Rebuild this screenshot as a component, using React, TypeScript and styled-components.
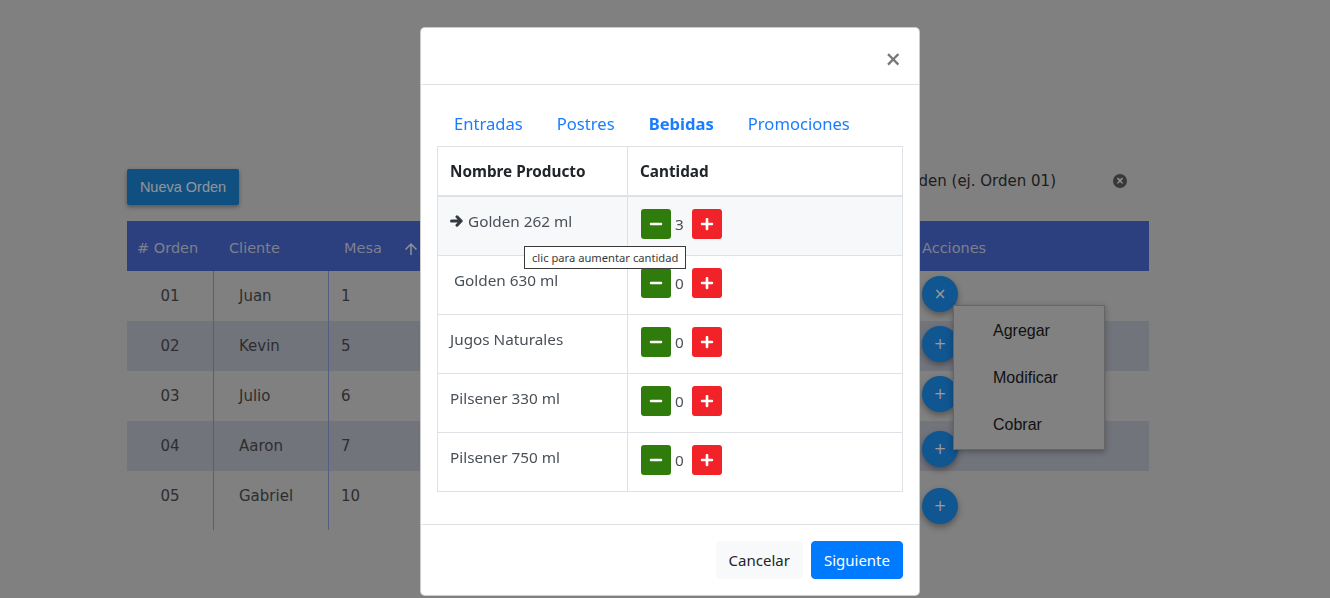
import React from 'react';
import styled, { createGlobalStyle } from 'styled-components';
import { FaMinus, FaPlus } from 'react-icons/fa';
import { MdArrowUpward } from 'react-icons/md';

const GlobalStyle = createGlobalStyle`
  html, body { margin: 0; padding: 0; }
  body {
    background: #d5d5d5;
    font-family: "DejaVu Sans", sans-serif;
    overflow: hidden;
  }
  * { box-sizing: border-box; }
`;

/* ---------- background page ---------- */

const Page = styled.div`
  width: 1330px;
  height: 598px;
  padding: 169px 181px 0 127px;
`;

const Toolbar = styled.div`
  display: flex;
  align-items: flex-start;
  justify-content: space-between;
  height: 36px;
`;

const NewOrderButton = styled.button`
  width: 112px;
  height: 36px;
  border: none;
  border-radius: 2px;
  background: #1a85d8;
  color: #f2f6fb;
  font-family: "Liberation Sans", Arial, sans-serif;
  font-size: 14.5px;
  box-shadow: 0 2px 4px rgba(0, 0, 0, 0.35);
  padding: 0;
`;

const Search = styled.div`
  display: flex;
  align-items: center;
  padding: 3px 22px 0 0;
  gap: 57px;
`;

const SearchText = styled.span`
  font-size: 15px;
  line-height: 18px;
  color: #333;
`;

const ClearIcon = styled.span`
  width: 14px;
  height: 14px;
  border-radius: 50%;
  background: #5e5e5e;
  color: #fff;
  font-size: 10px;
  line-height: 14px;
  text-align: center;
  font-weight: bold;
`;

const OrdersGrid = styled.div`
  position: relative;
  margin-top: 16px;
`;

const GridRow = styled.div<{ $head?: boolean; $striped?: boolean; $extra?: number }>`
  display: grid;
  grid-template-columns: 87px 115px 1fr 237px;
  grid-template-rows: 100%;
  height: ${p => 50 + (p.$extra || 0)}px;
  background: ${p => (p.$head ? '#4a69d3' : p.$striped ? '#bec1cf' : 'transparent')};
  color: ${p => (p.$head ? '#cfd5ea' : '#4e4e4e')};
`;

const Cell = styled.div<{ $pad?: number; $center?: boolean; $line?: boolean; $extra?: number }>`
  display: flex;
  align-items: center;
  justify-content: ${p => (p.$center ? 'center' : 'flex-start')};
  padding-left: ${p => p.$pad || 0}px;
  padding-bottom: ${p => p.$extra || 0}px;
  border-right: ${p => (p.$line ? '1px solid #8e9dd6' : 'none')};
  font-size: 15px;
`;

const HeadCell = styled.div<{ $pad: number }>`
  display: flex;
  align-items: center;
  padding-left: ${p => p.$pad}px;
  padding-top: 4px;
  font-size: 14.5px;
  gap: 20px;
`;

const HeadArrow = styled(MdArrowUpward)`
  color: #f4f6ff;
  margin-top: 2px;
`;

const ActionCircle = styled.div<{ $shift?: number }>`
  width: 36px;
  height: 36px;
  border-radius: 50%;
  background: #1c8ff0;
  color: #fff;
  display: flex;
  align-items: center;
  justify-content: center;
  font-size: 15px;
  transform: translateY(${p => p.$shift || 0}px);
  box-shadow: 0 3px 6px rgba(0, 0, 0, 0.35);
`;

const ContextMenu = styled.div`
  position: absolute;
  left: 826px;
  top: 84px;
  width: 152px;
  padding: 1px 0;
  background: #d8d8d8;
  border: 1px solid #a8a8a8;
  box-shadow: 0 2px 6px rgba(0, 0, 0, 0.3);
`;

const MenuItem = styled.div`
  height: 47px;
  line-height: 47px;
  padding-left: 39px;
  font-family: "Liberation Sans", Arial, sans-serif;
  font-size: 16px;
  color: #1c1c1c;
`;

/* ---------- modal ---------- */

const Backdrop = styled.div`
  position: fixed;
  inset: 0;
  background: rgba(0, 0, 0, 0.4);
  z-index: 10;
`;

const Dialog = styled.div`
  position: relative;
  width: 500px;
  margin: 27px 0 0 420px;
  background: #fff;
  border: 1px solid rgba(0, 0, 0, 0.2);
  border-radius: 5px;
  font-family: "Noto Sans", "Open Sans", sans-serif;
  color: #212529;
`;

const ModalHeader = styled.div`
  height: 57px;
  border-bottom: 1px solid #dee2e6;
  display: flex;
  align-items: center;
  justify-content: flex-end;
  padding: 0 18px 0 16px;
`;

const CloseButton = styled.button`
  border: none;
  background: none;
  padding: 0;
  font-family: "Noto Sans", sans-serif;
  font-size: 27px;
  font-weight: 500;
  line-height: 1;
  color: #777;
  margin-top: 4px;
`;

const ModalBody = styled.div`
  padding: 16px 16px 32px;
`;

const Tabs = styled.nav`
  display: flex;
  height: 45px;
`;

const Tab = styled.a<{ $active?: boolean }>`
  padding: 0 17px;
  line-height: 45px;
  font-size: 16.6px;
  color: #1a7dff;
  font-weight: ${p => (p.$active ? 700 : 400)};
  text-decoration: none;
`;

const ProductTable = styled.table`
  width: 466px;
  border-collapse: collapse;
  font-size: 15.3px;
`;

const Th = styled.th<{ $w?: number }>`
  width: ${p => (p.$w ? `${p.$w}px` : 'auto')};
  text-align: left;
  padding: 12px;
  line-height: 24px;
  font-weight: 700;
  border: 1px solid #dee2e6;
  border-bottom: 2px solid #dee2e6;
  color: #212529;
`;

const Tr = styled.tr<{ $hover?: boolean }>`
  background: ${p => (p.$hover ? '#f7f8fa' : '#fff')};
`;

const Td = styled.td`
  padding: 12px;
  vertical-align: top;
  border: 1px solid #dee2e6;
  color: #495057;
`;

const NameBox = styled.div`
  height: 34px;
  line-height: 24px;
  display: flex;
  align-items: flex-start;
  gap: 4px;
`;

const ArrowSvg = styled.svg`
  width: 14px;
  height: 12px;
  margin-top: 6px;
  flex: none;
`;

const ArrowIcon = () => (
  <ArrowSvg viewBox="0 0 14 12">
    <path
      d="M1.5 6 H11 M7 1.8 L11.2 6 L7 10.2"
      fill="none"
      stroke="#343a40"
      strokeWidth="3"
      strokeLinecap="round"
      strokeLinejoin="round"
    />
  </ArrowSvg>
);

const Controls = styled.div`
  height: 34px;
  display: flex;
  align-items: flex-start;
  gap: 4px;
  padding-left: 1px;
`;

const QtyButton = styled.button<{ $kind: 'minus' | 'plus' }>`
  width: 30px;
  height: 30px;
  border: none;
  border-radius: 3px;
  padding: 0;
  display: flex;
  align-items: center;
  justify-content: center;
  color: #fff;
  background: ${p => (p.$kind === 'minus' ? '#2f7c0c' : '#f12228')};
`;

const Qty = styled.span`
  line-height: 30px;
  width: 13px;
  text-align: left;
`;

const Tooltip = styled.div`
  position: absolute;
  left: 103px;
  top: 218px;
  height: 23px;
  padding: 0 7px;
  background: #fff;
  border: 1px solid #3a3a3a;
  font-size: 11.2px;
  line-height: 21px;
  color: #3a3a3a;
  white-space: nowrap;
`;

const ModalFooter = styled.div`
  border-top: 1px solid #dee2e6;
  padding: 16px;
  display: flex;
  justify-content: flex-end;
  gap: 8px;
`;

const FooterButton = styled.button<{ $primary?: boolean }>`
  height: 38px;
  padding: 0 12px;
  border: 1px solid ${p => (p.$primary ? '#007bff' : '#f8f9fa')};
  border-radius: 4px;
  background: ${p => (p.$primary ? '#007bff' : '#f8f9fa')};
  color: ${p => (p.$primary ? '#fff' : '#212529')};
  font-family: "Noto Sans", "Open Sans", sans-serif;
  font-size: 15px;
`;

const orders = [
  { id: '01', client: 'Juan', table: '1', icon: '×', shift: -2 },
  { id: '02', client: 'Kevin', table: '5', icon: '+', shift: -2 },
  { id: '03', client: 'Julio', table: '6', icon: '+', shift: -2 },
  { id: '04', client: 'Aaron', table: '7', icon: '+', shift: 3 },
  { id: '05', client: 'Gabriel', table: '10', icon: '+', shift: 10 },
];

const products = [
  { name: 'Golden 262 ml', qty: 3, active: true, lead: false },
  { name: 'Golden 630 ml', qty: 0, active: false, lead: true },
  { name: 'Jugos Naturales', qty: 0, active: false, lead: false },
  { name: 'Pilsener 330 ml', qty: 0, active: false, lead: false },
  { name: 'Pilsener 750 ml', qty: 0, active: false, lead: false },
];

export default function App() {
  return (
    <>
      <GlobalStyle />
      <Page>
        <Toolbar>
          <NewOrderButton>Nueva Orden</NewOrderButton>
          <Search>
            <SearchText>Buscar Orden (ej. Orden 01)</SearchText>
            <ClearIcon>×</ClearIcon>
          </Search>
        </Toolbar>
        <OrdersGrid>
          <GridRow $head>
            <HeadCell $pad={10}># Orden</HeadCell>
            <HeadCell $pad={15}>Cliente</HeadCell>
            <HeadCell $pad={15}>
              Mesa <HeadArrow size={18} />
            </HeadCell>
            <HeadCell $pad={10}>Acciones</HeadCell>
          </GridRow>
          {orders.map((o, i) => {
            const extra = i === orders.length - 1 ? 9 : 0;
            return (
              <GridRow key={o.id} $striped={i % 2 === 1} $extra={extra}>
                <Cell $center $line $extra={extra}>{o.id}</Cell>
                <Cell $pad={25} $line $extra={extra}>{o.client}</Cell>
                <Cell $pad={12} $extra={extra}>{o.table}</Cell>
                <Cell $pad={10} $extra={extra}>
                  <ActionCircle $shift={o.shift}>{o.icon}</ActionCircle>
                </Cell>
              </GridRow>
            );
          })}
          <ContextMenu>
            <MenuItem>Agregar</MenuItem>
            <MenuItem>Modificar</MenuItem>
            <MenuItem>Cobrar</MenuItem>
          </ContextMenu>
        </OrdersGrid>
      </Page>

      <Backdrop>
        <Dialog>
          <ModalHeader>
            <CloseButton>×</CloseButton>
          </ModalHeader>
          <ModalBody>
            <Tabs>
              <Tab>Entradas</Tab>
              <Tab>Postres</Tab>
              <Tab $active>Bebidas</Tab>
              <Tab>Promociones</Tab>
            </Tabs>
            <ProductTable>
              <thead>
                <tr>
                  <Th $w={190}>Nombre Producto</Th>
                  <Th>Cantidad</Th>
                </tr>
              </thead>
              <tbody>
                {products.map(p => (
                  <Tr key={p.name} $hover={p.active}>
                    <Td>
                      <NameBox>
                        {p.active && <ArrowIcon />}
                        <span>{p.lead ? '\u00a0' + p.name : p.name}</span>
                      </NameBox>
                    </Td>
                    <Td>
                      <Controls>
                        <QtyButton $kind="minus"><FaMinus size={14} /></QtyButton>
                        <Qty>{p.qty}</Qty>
                        <QtyButton $kind="plus"><FaPlus size={14} /></QtyButton>
                      </Controls>
                    </Td>
                  </Tr>
                ))}
              </tbody>
            </ProductTable>
          </ModalBody>
          <ModalFooter>
            <FooterButton>Cancelar</FooterButton>
            <FooterButton $primary>Siguiente</FooterButton>
          </ModalFooter>
          <Tooltip>clic para aumentar cantidad</Tooltip>
        </Dialog>
      </Backdrop>
    </>
  );
}
